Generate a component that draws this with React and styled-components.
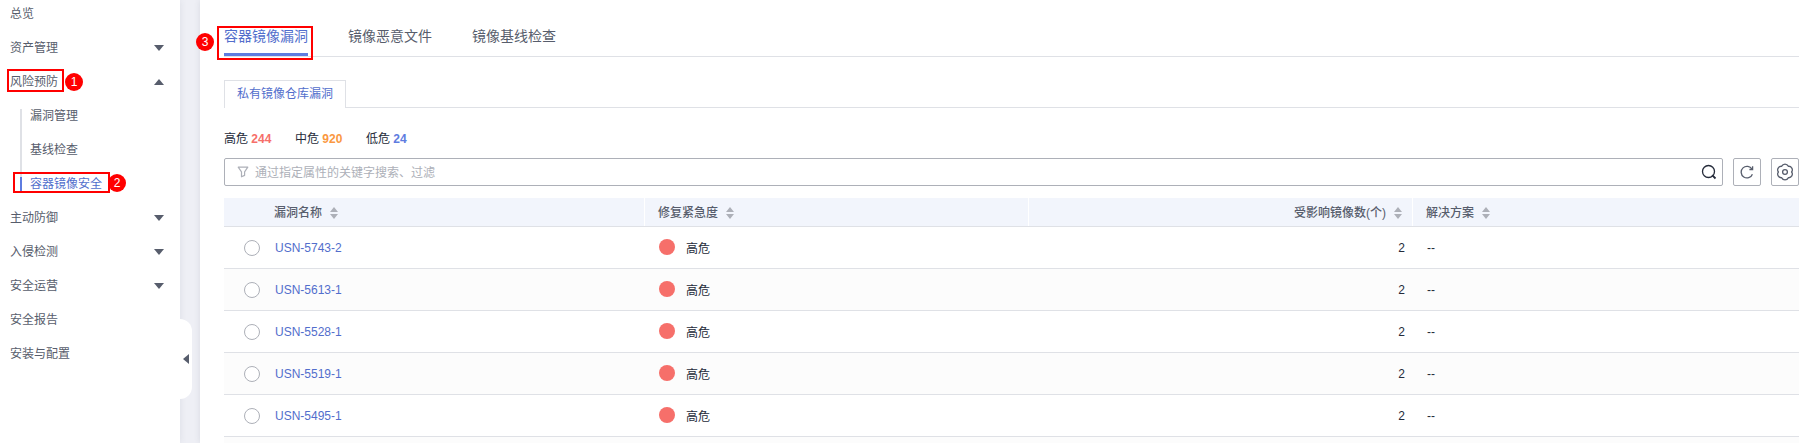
import React from 'react';
import styled, { createGlobalStyle, css } from 'styled-components';

const Global = createGlobalStyle`
  * { box-sizing: border-box; }
  body {
    margin: 0;
    overflow: hidden;
    background: #eeeff5;
    color: #252b3a;
    font: 12px/18px "Liberation Sans", "Noto Sans CJK SC", sans-serif;
  }
`;

const Page = styled.div`
  display: flex;
  gap: 20px;
  height: 443px;
  overflow: hidden;
`;

const Sidebar = styled.nav`
  position: relative;
  flex: 0 0 180px;
  background: #fff;
  box-shadow: 0 0 7px rgba(60, 65, 85, 0.1);
`;

const Menu = styled.ul`
  list-style: none;
  margin: -3px 0 0;
  padding: 0;
`;

const MenuItem = styled.li`
  display: flex;
  align-items: center;
  justify-content: space-between;
  height: 34px;
  padding: 0 16px 0 10px;
  color: #575d6c;
`;

const SubMenu = styled.ul`
  list-style: none;
  margin: 0;
  padding: 0 0 0 20px;
`;

const SubItem = styled.li`
  display: flex;
  align-items: center;
  height: 34px;
  color: ${(p) => (p.$active ? '#526ecc' : '#575d6c')};
  &::before {
    content: '';
    align-self: ${(p) => (p.$first ? 'flex-end' : p.$active ? 'center' : 'stretch')};
    width: 2px;
    height: ${(p) => (p.$first ? '24px' : p.$active ? '34px' : 'auto')};
    margin-right: 8px;
    background: ${(p) =>
      p.$active
        ? 'linear-gradient(#dfe1e6 10px, #5e7ce0 10px, #5e7ce0 24px, transparent 24px)'
        : '#dfe1e6'};
  }
`;

const Label = styled.span`
  position: relative;
`;

const Caret = styled.i`
  border: 5px solid transparent;
  ${(p) =>
    p.$up
      ? css`border-width: 0 5px 6px; border-bottom-color: #575d6c;`
      : css`border-width: 6px 5px 0; border-top-color: #575d6c;`}
`;

const Collapse = styled.button`
  position: absolute;
  left: 180px;
  top: 319px;
  width: 12px;
  height: 80px;
  padding: 0 3px;
  border: 0;
  border-radius: 0 12px 12px 0;
  background: #fff;
  &::before {
    content: '';
    display: block;
    border: solid transparent;
    border-width: 5px 6px 5px 0;
    border-right-color: #575d6c;
  }
`;

const Frame = styled.span`
  position: absolute;
  left: ${(p) => p.$x}px;
  top: ${(p) => p.$y}px;
  width: ${(p) => p.$w}px;
  height: ${(p) => p.$h}px;
  border: 2px solid #f00;
  pointer-events: none;
`;

const Badge = styled.span`
  position: absolute;
  left: ${(p) => p.$x}px;
  top: ${(p) => p.$y}px;
  width: 18px;
  height: 18px;
  border-radius: 50%;
  background: #f00;
  color: #fff;
  font-size: 12px;
  line-height: 18px;
  text-align: center;
`;

const Main = styled.main`
  flex: 1;
  min-width: 0;
  padding: 16px 10px 0 24px;
  background: #fff;
  box-shadow: 0 0 6px rgba(60, 65, 85, 0.12);
`;

const Tabs = styled.div`
  display: flex;
  gap: 40px;
  height: 41px;
  border-bottom: 1px solid #dfe1e6;
`;

const Tab = styled.a`
  position: relative;
  height: 40px;
  font-size: 14px;
  line-height: 40px;
  color: ${(p) => (p.$active ? '#526ecc' : '#575d6c')};
  border-bottom: 3px solid ${(p) => (p.$active ? '#5e7ce0' : 'transparent')};
`;

const SubTabs = styled.div`
  display: flex;
  height: 28px;
  margin-top: 23px;
  &::after {
    content: '';
    flex: 1;
    border-bottom: 1px solid #dfe1e6;
  }
`;

const SubTab = styled.a`
  width: 122px;
  padding-left: 12px;
  border: 1px solid #dfe1e6;
  border-bottom: 0;
  line-height: 26px;
  color: #526ecc;
`;

const Stats = styled.div`
  display: flex;
  gap: 23.6px;
  margin-top: 22px;
  height: 18px;
`;

const Stat = styled.span`
  white-space: pre;
  b { color: ${(p) => p.$color}; }
`;

const Toolbar = styled.div`
  display: flex;
  gap: 10px;
  height: 28px;
  margin-top: 10px;
`;

const Search = styled.div`
  flex: 1;
  display: flex;
  align-items: center;
  padding: 0 5px 0 12px;
  border: 1px solid #adb0b8;
  border-radius: 2px;
  color: #adb0b8;
`;

const Placeholder = styled.span`
  flex: 1;
  padding: 2px 0 0 6px;
`;

const ToolButton = styled.button`
  display: flex;
  align-items: center;
  justify-content: center;
  width: 28px;
  height: 28px;
  padding: 0;
  border: 1px solid #adb0b8;
  border-radius: 2px;
  background: #fff;
`;

const Table = styled.div`
  margin-top: 12px;
`;

const Row = styled.div`
  display: grid;
  grid-template-columns: 420px 384px 384px 1fr;
  height: 42px;
  border-bottom: 1px solid #dfe1e6;
  background: ${(p) => (p.$striped ? '#fcfcfc' : '#fff')};
`;

const HeadRow = styled(Row)`
  height: 29px;
  background: #f2f5fc;
  color: #575d6c;
`;

const HeadCell = styled.div`
  display: flex;
  align-items: center;
  gap: 8px;
  padding: 1px ${(p) => (p.$end ? '10px' : '0')} 0 ${(p) => (p.$first ? '50px' : '13px')};
  justify-content: ${(p) => (p.$end ? 'flex-end' : 'flex-start')};
  font-weight: 500;
  & + & { border-left: 1px solid #fff; }
`;

const Cell = styled.div`
  display: flex;
  align-items: center;
  padding: 0 7px 0 ${(p) => (p.$first ? '20px' : '15px')};
  justify-content: ${(p) => (p.$end ? 'flex-end' : 'flex-start')};
`;

const Radio = styled.span`
  width: 16px;
  height: 16px;
  margin: 1px 15px 0 0;
  border: 1px solid #adb0b8;
  border-radius: 50%;
  background: #fff;
`;

const Link = styled.a`
  color: #526ecc;
`;

const Dot = styled.span`
  width: 16px;
  height: 16px;
  margin: 0 11px 1px 0;
  border-radius: 50%;
  background: #f66f6a;
`;

const Severity = styled.span`
  padding-top: 3px;
`;

const Sort = () => (
  <svg width="8" height="12" viewBox="0 0 8 12" fill="#adb0b8">
    <path d="M4 0l4 5H0zM4 12l4-5H0z" />
  </svg>
);

const FilterIcon = () => (
  <svg width="12" height="12" viewBox="0 0 12 12" fill="none" stroke="#adb0b8" strokeWidth="1.2" strokeLinejoin="round">
    <path d="M1.2 1.2h9.6L7.6 5.8v3.6L4.5 10.8v-5z" />
  </svg>
);

const SearchIcon = () => (
  <svg width="16" height="16" viewBox="0 0 16 16" fill="none" stroke="#252b3a" strokeWidth="1.3">
    <circle cx="7.5" cy="7.5" r="6" />
    <path d="M11.2 11.2l3.3 3.3" strokeWidth="1.8" />
  </svg>
);

const RefreshIcon = () => (
  <svg width="14" height="14" viewBox="0 0 14 14" fill="none" stroke="#575d6c" strokeWidth="1.3">
    <path d="M12.4 9.2A5.8 5.8 0 1 1 12 4.2" />
    <path d="M12.6 1.2v3.3H9.4" />
  </svg>
);

const GearIcon = () => (
  <svg width="18" height="18" viewBox="0 0 18 18" fill="none" stroke="#575d6c" strokeWidth="1.3" strokeLinejoin="round">
    <path d="M15.6 9A3.6 3.6 0 0 0 12.3 3.28A3.6 3.6 0 0 0 5.7 3.28A3.6 3.6 0 0 0 2.4 9A3.6 3.6 0 0 0 5.7 14.72A3.6 3.6 0 0 0 12.3 14.72A3.6 3.6 0 0 0 15.6 9z" />
    <circle cx="9" cy="9" r="2.4" />
  </svg>
);

const vulnerabilities = ['USN-5743-2', 'USN-5613-1', 'USN-5528-1', 'USN-5519-1', 'USN-5495-1'];

export default function App() {
  return (
    <>
      <Global />
      <Page>
        <Sidebar>
          <Menu>
            <MenuItem>总览</MenuItem>
            <MenuItem>资产管理<Caret /></MenuItem>
            <MenuItem>
              <Label>
                风险预防
                <Frame $x={-3} $y={-4} $w={57} $h={23} />
                <Badge $x={55} $y={0}>1</Badge>
              </Label>
              <Caret $up />
            </MenuItem>
            <SubMenu>
              <SubItem $first>漏洞管理</SubItem>
              <SubItem>基线检查</SubItem>
              <SubItem $active>
                <Label>
                  容器镜像安全
                  <Frame $x={-17} $y={-3} $w={97} $h={21} />
                  <Badge $x={78} $y={-1}>2</Badge>
                </Label>
              </SubItem>
            </SubMenu>
            <MenuItem>主动防御<Caret /></MenuItem>
            <MenuItem>入侵检测<Caret /></MenuItem>
            <MenuItem>安全运营<Caret /></MenuItem>
            <MenuItem>安全报告</MenuItem>
            <MenuItem>安装与配置</MenuItem>
          </Menu>
          <Collapse aria-label="收起" />
        </Sidebar>
        <Main>
          <Tabs>
            <Tab $active>
              容器镜像漏洞
              <Frame $x={-7} $y={10} $w={96} $h={34} />
              <Badge $x={-28} $y={17}>3</Badge>
            </Tab>
            <Tab>镜像恶意文件</Tab>
            <Tab>镜像基线检查</Tab>
          </Tabs>
          <SubTabs>
            <SubTab>私有镜像仓库漏洞</SubTab>
          </SubTabs>
          <Stats>
            <Stat $color="#f66f6a">高危 <b>244</b></Stat>
            <Stat $color="#fa9841">中危 <b>920</b></Stat>
            <Stat $color="#5e7ce0">低危 <b>24</b></Stat>
          </Stats>
          <Toolbar>
            <Search>
              <FilterIcon />
              <Placeholder>通过指定属性的关键字搜索、过滤</Placeholder>
              <SearchIcon />
            </Search>
            <ToolButton aria-label="刷新"><RefreshIcon /></ToolButton>
            <ToolButton aria-label="设置"><GearIcon /></ToolButton>
          </Toolbar>
          <Table>
            <HeadRow>
              <HeadCell $first>漏洞名称<Sort /></HeadCell>
              <HeadCell>修复紧急度<Sort /></HeadCell>
              <HeadCell $end>受影响镜像数(个)<Sort /></HeadCell>
              <HeadCell>解决方案<Sort /></HeadCell>
            </HeadRow>
            {vulnerabilities.map((name, i) => (
              <Row key={name} $striped={i % 2 === 1}>
                <Cell $first><Radio /><Link>{name}</Link></Cell>
                <Cell><Dot /><Severity>高危</Severity></Cell>
                <Cell $end>2</Cell>
                <Cell>--</Cell>
              </Row>
            ))}
            <Row $striped />
          </Table>
        </Main>
      </Page>
    </>
  );
}
